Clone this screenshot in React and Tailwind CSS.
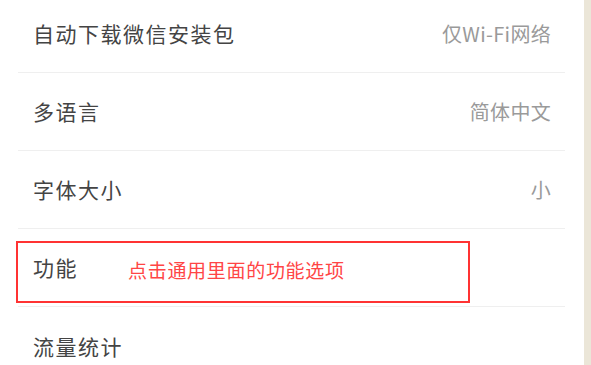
export default function App() {
  const font = { fontFamily: '"Noto Sans CJK SC", "Noto Sans", sans-serif' };
  const rows = [
    { label: "自动下载微信安装包", value: "仅Wi-Fi网络" },
    { label: "多语言", value: "简体中文" },
    { label: "字体大小", value: "小" },
    { label: "功能", value: "", note: "点击通用里面的功能选项" },
    { label: "流量统计", value: "" },
  ];
  return (
    <div className="w-[591px] h-[365px] overflow-hidden flex bg-white" style={font}>
      <div className="flex-1 bg-white">
        <div className="mt-[-5px] pl-[18px] pr-[19px]">
          {rows.map((r, i) => (
            <div key={i} className={`relative h-[78px] flex items-center ${i < rows.length - 1 ? "border-b border-[#efefef]" : ""}`}>
              <span className="pl-[15px] text-[21px] leading-none text-[#444444] tracking-[1.5px]">{r.label}</span>
              {r.note && (
                <span className="absolute left-[110px] top-[31px] text-[19px] leading-none text-[#ff4545] tracking-[0.7px]">{r.note}</span>
              )}
              {r.note && (
                <div className="absolute left-[-2px] top-[12px] w-[454px] h-[62px] border-2 border-[#ff3333]" />
              )}
              <span className="ml-auto pr-[14px] text-[20px] leading-none text-[#9a9a9a] tracking-[0.3px]">{r.value}</span>
            </div>
          ))}
        </div>
      </div>
      <div className="w-[7px] bg-[#ebe6d8]" />
    </div>
  );
}
